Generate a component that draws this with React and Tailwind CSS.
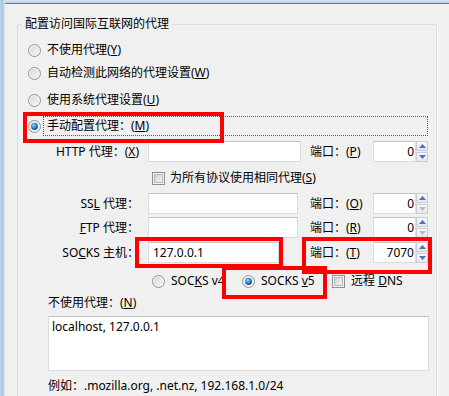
function Radio({ checked = false }) {
  return (
    <svg width="13" height="13" viewBox="0 0 13 13" className="shrink-0">
      <defs>
        <linearGradient id="rdRing" x1="0" y1="0" x2="1" y2="1">
          <stop offset="0" stopColor="#d9d9d9" />
          <stop offset="1" stopColor="#f6f6f6" />
        </linearGradient>
        <radialGradient id="rdDot" cx="0.4" cy="0.35" r="0.7">
          <stop offset="0" stopColor="#9fdcff" />
          <stop offset="0.5" stopColor="#2e86cf" />
          <stop offset="1" stopColor="#0f3f7a" />
        </radialGradient>
      </defs>
      <circle cx="6.5" cy="6.5" r="6" fill="#f4f4f4" stroke="#8f9396" strokeWidth="1" />
      <circle cx="6.5" cy="6.5" r="4.5" fill="url(#rdRing)" />
      {checked && <circle cx="6.5" cy="6.5" r="3.4" fill="url(#rdDot)" />}
    </svg>
  );
}

function Checkbox() {
  return (
    <svg width="13" height="13" viewBox="0 0 13 13" className="shrink-0">
      <defs>
        <linearGradient id="cbFill" x1="0" y1="0" x2="1" y2="1">
          <stop offset="0" stopColor="#cfcfcf" />
          <stop offset="1" stopColor="#f7f7f7" />
        </linearGradient>
      </defs>
      <rect x="0.5" y="0.5" width="12" height="12" fill="#f5f5f5" stroke="#8e8f8f" />
      <rect x="2.5" y="2.5" width="8" height="8" fill="url(#cbFill)" stroke="#b8b8b8" />
    </svg>
  );
}

function TextBox({ width, children }) {
  return (
    <div
      className="h-[21px] bg-white border border-[#dadce0] border-t-[#bfc2c7] flex items-center px-[4px] shrink-0"
      style={{ width }}
    >
      {children}
    </div>
  );
}

function SpinArrow({ up, enabled }) {
  return (
    <div className="h-[10px] w-[12px] border border-[#c9ced6] bg-gradient-to-b from-[#f7f8fa] to-[#e4e7ec] flex items-center justify-center">
      <svg width="7" height="4" viewBox="0 0 7 4">
        <path
          d={up ? "M0 4 L3.5 0 L7 4 Z" : "M0 0 L3.5 4 L7 0 Z"}
          fill={enabled ? "#4c74b4" : "#b6b9be"}
        />
      </svg>
    </div>
  );
}

function PortBox({ value, downEnabled = true }) {
  return (
    <div className="flex shrink-0">
      <div className="h-[21px] w-[43px] bg-white border border-[#dadce0] border-t-[#bfc2c7] flex items-center justify-end pr-[1px]">
        {value}
      </div>
      <div className="flex flex-col gap-px">
        <SpinArrow up enabled />
        <SpinArrow enabled={downEnabled} />
      </div>
    </div>
  );
}

function ProxyRow({ label, boxWidth, host, portLabel, port, downEnabled, className }) {
  return (
    <div className={`h-[21px] flex items-center ${className}`}>
      <div className="w-[122px] text-right pr-[1px]">{label}</div>
      <div className="ml-[8px] w-[162px] shrink-0">
        <TextBox width={boxWidth}>{host}</TextBox>
      </div>
      <div className="w-[63px] shrink-0">{portLabel}</div>
      <PortBox value={port} downEnabled={downEnabled} />
    </div>
  );
}

export default function App() {
  return (
    <div className="relative w-[449px] h-[396px] overflow-hidden bg-[#f0f0f0] flex font-['Noto_Sans','Noto_Sans_CJK_SC',sans-serif] text-[12px] leading-[16px] text-black">
      {/* window frame, left edge */}
      <div className="w-[4px] shrink-0 bg-gradient-to-r from-[#c5d9ee] via-[#a6c4e3] to-[#bcd3eb]" />
      <div className="w-px shrink-0 bg-[#dce4ec]" />

      <div className="flex-1 flex flex-col">
        {/* window frame, top edge */}
        <div className="h-[3px] shrink-0 bg-gradient-to-b from-[#dbe6f2] to-[#b8cfe7]" />
        <div className="h-px shrink-0 bg-[#6a7b8e]" />

        <div className="pl-[12px]">
          <fieldset className="mt-[12px] w-[420px] border border-[#d5dfe5] rounded-[2px] shadow-[1px_1px_0_#ffffff] pb-[12px]">
            <legend className="ml-[4px] px-[3px] leading-[16px]">配置访问国际互联网的代理</legend>

            <div className="flex flex-col">
              <div className="mt-[8px] h-[20px] flex items-center pl-[10px] gap-[6px]">
                <Radio />
                <span>不使用代理(<u>Y</u>)</span>
              </div>
              <div className="mt-[3px] h-[20px] flex items-center pl-[10px] gap-[6px]">
                <Radio />
                <span>自动检测此网络的代理设置(<u>W</u>)</span>
              </div>
              <div className="mt-[7px] h-[20px] flex items-center pl-[10px] gap-[6px]">
                <Radio />
                <span>使用系统代理设置(<u>U</u>)</span>
              </div>
              <div className="mt-[6px] h-[20px] flex items-center pl-[10px]">
                <Radio checked />
                <div className="ml-[2px] w-[385px] h-[20px] border border-dotted border-[#5a5a5a] flex items-center pl-[3px]">
                  手动配置代理：(<u>M</u>)
                </div>
              </div>

              <ProxyRow
                className="mt-[5px]"
                label={<>HTTP 代理：(<u>X</u>)</>}
                boxWidth={153}
                host=""
                portLabel={<>端口：(<u>P</u>)</>}
                port="0"
                downEnabled
              />

              <div className="mt-[6px] h-[20px] flex items-center pl-[134px] gap-[5px]">
                <Checkbox />
                <span>为所有协议使用相同代理(<u>S</u>)</span>
              </div>

              <ProxyRow
                className="mt-[5px]"
                label={<>SS<u>L</u> 代理：</>}
                boxWidth={150}
                host=""
                portLabel={<>端口：(<u>O</u>)</>}
                port="0"
                downEnabled={false}
              />
              <ProxyRow
                className="mt-[3px]"
                label={<><u>F</u>TP 代理：</>}
                boxWidth={150}
                host=""
                portLabel={<>端口：(<u>R</u>)</>}
                port="0"
                downEnabled={false}
              />
              <ProxyRow
                className="mt-[4px]"
                label={<>SO<u>C</u>KS 主机：</>}
                boxWidth={131}
                host="127.0.0.1"
                portLabel={<>端口：(<u>T</u>)</>}
                port="7070"
                downEnabled
              />

              <div className="mt-[8px] h-[20px] flex items-center pl-[134px]">
                <div className="w-[90px] flex items-center gap-[6px]">
                  <Radio />
                  <span>SOC<u>K</u>S v4</span>
                </div>
                <div className="w-[90px] flex items-center gap-[6px]">
                  <Radio checked />
                  <span>SOCKS <u>v</u>5</span>
                </div>
                <div className="flex items-center gap-[6px]">
                  <Checkbox />
                  <span>远程 <u>D</u>NS</span>
                </div>
              </div>

              <div className="mt-[4px] h-[16px] pl-[30px]">不使用代理：(<u>N</u>)</div>
              <div className="mt-[5px] ml-[30px] w-[381px] h-[55px] bg-white border border-[#dadce0] border-t-[#bfc2c7] px-[3px] pt-[2px]">
                localhost, 127.0.0.1
              </div>
              <div className="mt-[7px] h-[16px] pl-[30px]">例如：.mozilla.org, .net.nz, 192.168.1.0/24</div>
            </div>
          </fieldset>
        </div>
      </div>

      {/* red annotation boxes */}
      <div className="absolute left-[23px] top-[112px] w-[201px] h-[31px] border-[4px] border-[#ff0000]" />
      <div className="absolute left-[135px] top-[237px] w-[148px] h-[31px] border-[4px] border-[#ff0000]" />
      <div className="absolute left-[302px] top-[237px] w-[130px] h-[37px] border-[4px] border-[#ff0000]" />
      <div className="absolute left-[222px] top-[266px] w-[105px] h-[33px] border-[4px] border-[#ff0000]" />
    </div>
  );
}
